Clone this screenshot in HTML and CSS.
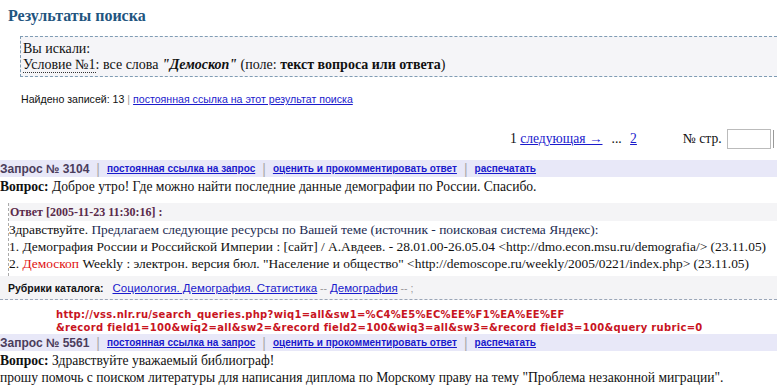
FILE: index.html
```html
<!DOCTYPE html>
<html lang="ru">
<head>
    <meta charset="UTF-8">
    <title>Результаты поиска</title>
    <link rel="stylesheet" href="styles.css">
</head>
<body>
    <h1 class="title">Результаты поиска</h1>

    <div class="query-box">
        <div>Вы искали:</div>
        <div><abbr class="cond">Условие №1</abbr>: все слова <b><i>"Демоскоп"</i></b> (поле: <b>текст вопроса или ответа</b>)</div>
    </div>

    <p class="found">Найдено записей: 13 <span class="sep">|</span> <a href="#">постоянная ссылка на этот результат поиска</a></p>

    <div class="pager">
        <span>1 <a href="#">следующая →</a></span>
        <span class="dots">... <a href="#" class="num">2</a></span>
        <span class="goto">№ стр. <input type="text" class="page-input"></span>
        <span class="btn-edge"></span>
    </div>

    <div class="req-bar">
        <span class="req-num">Запрос № 3104</span>
        <span class="bar-sep">|</span>
        <a href="#">постоянная ссылка на запрос</a>
        <span class="bar-sep">|</span>
        <a href="#">оценить и прокомментировать ответ</a>
        <span class="bar-sep">|</span>
        <a href="#">распечатать</a>
    </div>
    <p class="question"><b>Вопрос:</b> Доброе утро! Где можно найти последние данные демографии по России. Спасибо.</p>

    <div class="answer">
        <div class="answer-head">Ответ [2005-11-23 11:30:16] :</div>
        <div class="answer-body">
            Здравствуйте. <span class="navy">Предлагаем следующие ресурсы по Вашей теме (источник - поисковая система Яндекс):</span><br>
            1. Демография России и Российской Империи : [сайт] / А.Авдеев. - 28.01.00-26.05.04 &lt;http://dmo.econ.msu.ru/demografia/&gt; (23.11.05)<br>
            2. <span class="hl">Демоскоп</span> Weekly : электрон. версия бюл. "Население и общество" &lt;http://demoscope.ru/weekly/2005/0221/index.php&gt; (23.11.05)
        </div>
    </div>
    <div class="rubrics">
        <b>Рубрики каталога:</b>
        <a href="#">Социология. Демография. Статистика</a> <span class="sep">--</span> <a href="#">Демография</a> <span class="sep">-- ;</span>
    </div>

    <div class="url-note">
        http://vss.nlr.ru/search_queries.php?wiq1=all&amp;sw1=%C4%E5%EC%EE%F1%EA%EE%EF<br>
        &amp;record field1=100&amp;wiq2=all&amp;sw2=&amp;record field2=100&amp;wiq3=all&amp;sw3=&amp;record field3=100&amp;query rubric=0
    </div>

    <div class="req-bar req-bar-tight">
        <span class="req-num">Запрос № 5561</span>
        <span class="bar-sep">|</span>
        <a href="#">постоянная ссылка на запрос</a>
        <span class="bar-sep">|</span>
        <a href="#">оценить и прокомментировать ответ</a>
        <span class="bar-sep">|</span>
        <a href="#">распечатать</a>
    </div>
    <p class="question"><b>Вопрос:</b> Здравствуйте уважаемый библиограф!<br>
    прошу помочь с поиском литературы для написания диплома по Морскому праву на тему "Проблема незаконной миграции".</p>
</body>
</html>
```

FILE: styles.css
```css
body {
    margin: 0;
    font-family: "Liberation Serif", "Times New Roman", serif;
    font-size: 13.6px;
    color: #111;
    background: #fff;
    overflow: hidden;
}

a {
    color: #1a1acc;
}

.title {
    margin: 0;
    padding: 5px 0 0 8px;
    font-size: 16px;
    line-height: 21px;
    color: #1f5580;
}

.query-box {
    margin: 10px -10px 0 20px;
    padding: 4px 2px 3px;
    background: #f5f5f8;
    border: 1px dashed #7f9cb4;
    border-right: none;
    font-size: 14px;
    line-height: 16px;
}

.cond {
    text-decoration: none;
    border-bottom: 1px dotted #333;
}

.found {
    margin: 15px 0 0 21px;
    font-family: "Liberation Sans", Arial, sans-serif;
    font-size: 10.6px;
    line-height: 14px;
}

.sep {
    color: #999;
}

.pager {
    display: flex;
    align-items: center;
    white-space: nowrap;
    margin-top: 22px;
    padding-left: 510px;
    height: 22px;
}

.pager span {
    flex-shrink: 0;
}

.dots {
    margin-left: 9px;
}

.num {
    margin-left: 5px;
}

.goto {
    display: flex;
    align-items: center;
    margin-left: 46px;
}

.page-input {
    width: 42px;
    height: 18px;
    margin-left: 5px;
    padding: 0;
    border: 1px solid #bbb;
}

.btn-edge {
    width: 4px;
    height: 18px;
    margin-left: 2px;
    border-left: 1px solid #999;
}

.req-bar {
    display: flex;
    align-items: center;
    gap: 7px;
    height: 17px;
    margin-top: 10px;
    background: #e8e8f8;
    font-family: "Liberation Sans", Arial, sans-serif;
    font-weight: bold;
    font-size: 10px;
    white-space: nowrap;
}

.req-bar-tight {
    margin-top: 0;
}

.req-num {
    font-size: 12px;
    color: #4b3d5c;
}

.bar-sep {
    color: #aaa;
    font-weight: normal;
    font-size: 14px;
}

.question {
    margin: 1px 0 0;
    line-height: 17px;
}

.answer {
    margin: 8px 0 0 8px;
    border-left: 1px dashed #aaa;
}

.answer-head {
    background: #f4f4f6;
    font-weight: bold;
    font-size: 12px;
    line-height: 18px;
    padding-left: 1px;
    color: #5a2a4a;
}

.answer-body {
    padding-bottom: 4px;
    font-size: 13.45px;
    line-height: 17px;
    white-space: nowrap;
}

.navy {
    color: #1c2b52;
}

.hl {
    color: #e01010;
}

.rubrics {
    padding: 5px 0 4px 8px;
    background: #f4f4f6;
    border-bottom: 1px dashed #9aa6b8;
    font-family: "Liberation Sans", Arial, sans-serif;
    font-size: 10.5px;
    line-height: 14px;
}

.rubrics b {
    margin-right: 6px;
}

.rubrics a {
    font-size: 11.5px;
}

.url-note {
    padding: 8px 0 0 56px;
    color: #c8141e;
    font-family: "DejaVu Sans", Verdana, sans-serif;
    font-weight: bold;
    font-size: 10px;
    line-height: 13px;
    letter-spacing: 0.3px;
    white-space: nowrap;
}
```
